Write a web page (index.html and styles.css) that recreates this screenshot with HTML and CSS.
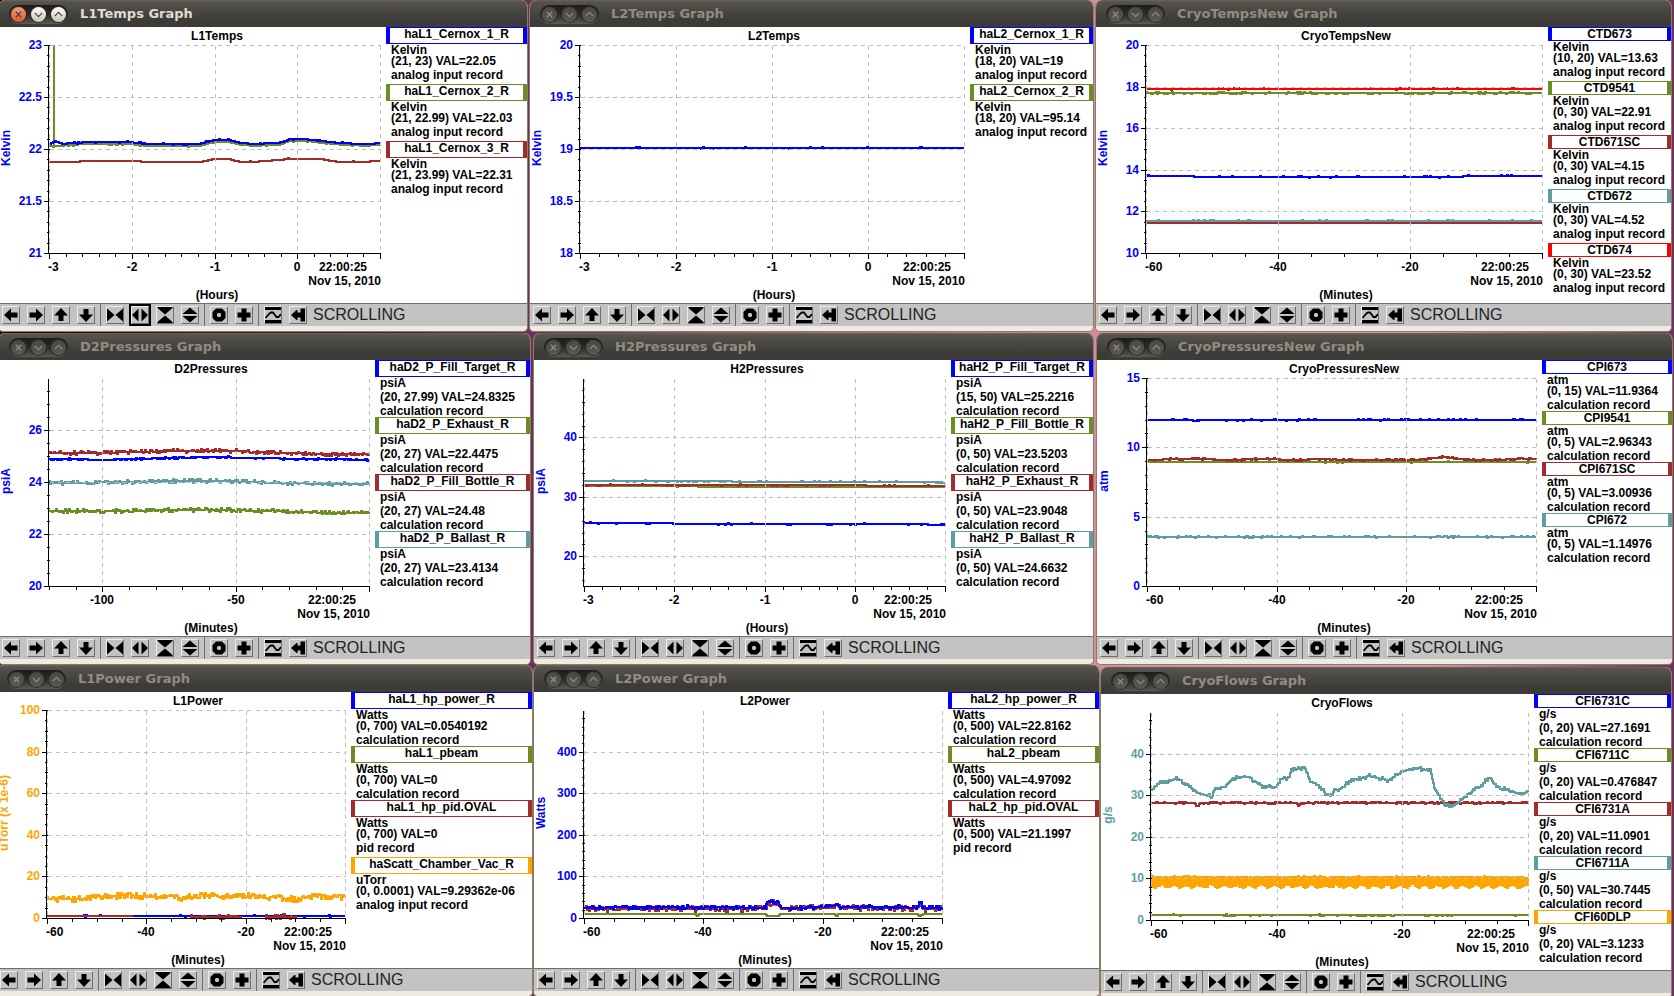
FILE: index.html
```html
<!DOCTYPE html>
<html lang="en">
<head>
    <meta charset="UTF-8">
    <meta name="viewport" content="width=device-width, initial-scale=1.0">
    <title>Strip Charts</title>
    <link rel="stylesheet" href="styles.css">
</head>
<body>
    <svg class="icons" aria-hidden="true">
        <symbol id="close" viewBox="0 0 14 14"><path d="M4.5 4.5l5 5M9.5 4.5l-5 5"/></symbol>
        <symbol id="min" viewBox="0 0 14 14"><path d="M3.5 5.5L7 9l3.500-3.500"/></symbol>
        <symbol id="max" viewBox="0 0 14 14"><path d="M3.500 8.500L7 5l3.500 3.500"/></symbol>
        <symbol id="left" viewBox="0 0 16 16"><path d="M1 8l7-6.500V5.500h6.500v5H8v4z"/></symbol>
        <symbol id="right" viewBox="0 0 16 16"><path d="M15 8L8 1.500V5.500H1.500v5H8v4z"/></symbol>
        <symbol id="up" viewBox="0 0 16 16"><path d="M8 1l7 7.500h-4.500V14h-5V8.500H1z"/></symbol>
        <symbol id="down" viewBox="0 0 16 16"><path d="M8 15l7-7.500h-4.500V2h-5v5.500H1z"/></symbol>
        <symbol id="squeeze-x" viewBox="0 0 16 16"><path d="M0 1.500L7.500 8 0 14.500zM16 1.500L8.500 8l7.500 6.500z"/></symbol>
        <symbol id="expand-x" viewBox="0 0 16 16"><path d="M6.500 1.500v13L0 8zM9.500 1.500v13L16 8z"/></symbol>
        <symbol id="squeeze-y" viewBox="0 0 16 16"><path d="M0.500 0h15v1L8 7.500 0.500 1zM0.500 16h15v-1L8 8.500 0.500 15z"/></symbol>
        <symbol id="expand-y" viewBox="0 0 16 16"><path d="M8 0.500L15.500 7H0.500zM8 15.500L15.500 9H0.500z"/></symbol>
        <symbol id="zero" viewBox="0 0 16 16"><path fill-rule="evenodd" d="M5 1.500h6L14.500 5v6L11 14.500H5L1.500 11V5zM7 6L6 7v2l1 1h2l1-1V7L9 6z"/></symbol>
        <symbol id="plus" viewBox="0 0 16 16"><path d="M5.500 1.500h5v4h4v5h-4v4h-5v-4h-4v-5h4z"/></symbol>
        <symbol id="wave" viewBox="0 0 16 16"><path d="M0 0h16v3H0zM0 13h16v3H0z"/><path class="line" d="M0.500 11L4.500 6.500 6 5.500h2l3.500 4.500h2L16 7"/></symbol>
        <symbol id="latest" viewBox="0 0 16 16"><path d="M1 8l5.500-5h1v2.500H10.500v-4h4.500v13h-4.500v-4H7.500V13h-1z"/></symbol>
    </svg>

    <main class="desktop">
        <div class="row row-temps" id="temps"></div>
        <div class="row row-pressures" id="pressures"></div>
        <div class="row row-power" id="power"></div>
    </main>

    <script src="script.js"></script>
</body>
</html>
```
FILE: styles.css
```css
body {
    margin: 0;
    font-family: "Liberation Sans", Arial, sans-serif;
    font-size: 12px;
    font-weight: bold;
    color: #000;
    overflow-x: hidden;
}
.icons {
    display: none;
}
.desktop {
    min-height: 100vh;
    background: linear-gradient(90deg, #1f0b1c 0, #4b1f42 25%, #733462 33%, #b06a8c 50%, #d48b9d 65%, #d995a4 85%, #70335c 100%);
}
.row {
    display: grid;
    align-items: start;
}
/* the left windows hang slightly over the edge of the screen */
.row-temps {
    grid-template-columns: minmax(0, 530fr) minmax(0, 565fr) minmax(0, 577fr);
    gap: 1px;
    margin-left: -2px;
    padding-right: 2px;
}
.row-pressures {
    grid-template-columns: minmax(0, 533fr) minmax(0, 561fr) minmax(0, 577fr);
    gap: 2px;
    margin: 1px 0 0 -2px;
    padding-right: 1px;
}
.row-power {
    grid-template-columns: minmax(0, 537fr) minmax(0, 567fr) minmax(0, 572fr);
    margin-left: -4px;
    padding-right: 2px;
    overflow: hidden;
}
.row-power .window {
    margin-bottom: -1px;
}
.row-power .window:last-child {
    margin: 2px 0 -3px;
}

/* window frame */
.window {
    border: 1px solid #8a7c66;
    border-top: none;
    border-radius: 7px 7px 5px 5px;
    background: #f0ebe2;
    padding-bottom: 5px;
    overflow: hidden;
}
.titlebar {
    display: flex;
    align-items: center;
    gap: 12px;
    height: 27px;
    padding: 1px 0 0 10px;
    box-sizing: border-box;
    background: linear-gradient(#6a655a 0, #55534c 2px, #3c3b37 75%);
}
.titlebar h2 {
    margin: 0;
    font-family: "DejaVu Sans", sans-serif;
    font-size: 13px;
    line-height: 18px;
    color: #918c80;
    white-space: nowrap;
}
.active .titlebar h2 {
    color: #dfdbd2;
}
.controls {
    display: flex;
    gap: 5px;
    padding: 2px;
    border-radius: 9px;
    background: linear-gradient(#1d1c1a, #2c2b28 50%, #5c5a54);
}
.controls button {
    width: 15px;
    height: 15px;
    padding: 0;
    border: none;
    border-radius: 50%;
    background: linear-gradient(#4a4843, #5a5852);
    box-shadow: 0 0 0 1px #2b2a27;
}
.controls svg {
    display: block;
    width: 15px;
    height: 15px;
    fill: none;
    stroke: #918c80;
    stroke-width: 1.2;
}
.active .controls button {
    background: linear-gradient(#fff, #c9c4ba);
}
.active .controls button:first-child {
    background: linear-gradient(#f79a73, #e2572b);
}
.active .controls svg {
    stroke: #4b4740;
}

/* chart and legend */
.content {
    display: flex;
    min-height: 276px;
    background: #fff;
}
.plot {
    flex: 1;
    min-width: 0;
}
.plot svg {
    display: block;
}
.plot text {
    font-size: 12px;
}
.axis {
    stroke: #000;
    shape-rendering: crispEdges;
}
.grid {
    stroke: #bebebe;
    stroke-dasharray: 4 4;
    shape-rendering: crispEdges;
}
.series {
    fill: none;
    stroke-width: 2;
    shape-rendering: crispEdges;
}
.legend {
    list-style: none;
    margin: 0;
    padding: 0;
    width: 123px;
    line-height: 11px;
    white-space: nowrap;
}
#L1Temps .legend { width: 141px; }
#D2Pressures .legend { width: 155px; }
#H2Pressures .legend { width: 142px; }
#CryoPressuresNew .legend { width: 130px; }
#L1Power .legend { width: 181px; }
#L2Power .legend { width: 151px; }
#CryoFlows .legend { width: 137px; }
.legend h3 {
    margin: 0 0 1px;
    border: solid;
    border-width: 1px 4px;
    font-size: 12px;
    line-height: 12px;
    text-align: center;
}
.legend h3 span {
    color: #000;
}
.legend p {
    margin: 0 0 0 5px;
}
.legend .deep {
    padding-bottom: 3px;
}
.blue { color: #0000ff; stroke: #0000ff; }
.green { color: #6b8e23; stroke: #6b8e23; }
.brown { color: #a52a2a; stroke: #a52a2a; }
.teal { color: #5f9ea0; stroke: #5f9ea0; }
.red { color: #ff0000; stroke: #ff0000; }
.orange { color: #ffa500; stroke: #ffa500; }
.plot text.blue, .plot text.teal, .plot text.orange {
    fill: currentColor;
    stroke: none;
}

/* toolbar */
.toolbar {
    display: flex;
    align-items: center;
    height: 23px;
    box-sizing: border-box;
    padding-left: 3px;
    border-top: 1px solid #6e6e6e;
    background: #c3c3c3;
}
.group {
    display: flex;
    align-items: center;
    gap: 7px;
    height: 22px;
    padding-right: 5px;
    margin-right: 5px;
    border-right: 1px solid #6e6e6e;
}
.group:nth-child(4) {
    border-right: none;
    margin-right: 1px;
}
.group button {
    width: 18px;
    height: 18px;
    padding: 0;
    box-sizing: border-box;
    border: 1px solid;
    border-color: #ececec #6e6e6e #6e6e6e #ececec;
    background: #c3c3c3;
}
.group svg {
    display: block;
    width: 16px;
    height: 16px;
}
#wave .line {
    fill: none;
    stroke: #000;
    stroke-width: 1.8;
}
.group .focused {
    outline: 2px solid #000;
}
.toolbar output {
    font-size: 16px;
    line-height: 22px;
    font-weight: normal;
    color: #222;
}
```
FILE: script.js
```js
const hours = { unit: '(Hours)', min: -3, max: 1, step: 1, minor: 5 };
const minutes = { unit: '(Minutes)', min: -60, max: 0, step: 20, minor: 4 };
const minutes120 = { unit: '(Minutes)', min: -120, max: 0, step: 50, minor: 5 };

const analog = 'analog input record';
const calc = 'calculation record';

// signals: [color, name, units, range and value, record type]
// series: pts are [part of the width, value], noise is in pixels, rate is how often it jumps
const windows = [
    {
        row: 'temps', name: 'L1Temps', active: true, x: hours,
        y: { label: 'Kelvin', color: 'blue', min: 21, max: 23, step: 0.5, minor: 5 },
        signals: [
            ['blue', 'haL1_Cernox_1_R', 'Kelvin', '(21, 23) VAL=22.05', analog],
            ['green', 'haL1_Cernox_2_R', 'Kelvin', '(21, 22.99) VAL=22.03', analog],
            ['brown', 'haL1_Cernox_3_R', 'Kelvin', '(21, 23.99) VAL=22.31', analog]
        ],
        series: [
            { color: 'brown', noise: 0.5, rate: 0.05, pts: [[0, 21.876], [0.08, 21.877], [0.12, 21.886], [0.27, 21.886], [0.28, 21.876], [0.46, 21.876], [0.5, 21.905], [0.54, 21.905], [0.57, 21.88], [0.62, 21.876], [0.65, 21.884], [0.7, 21.896], [0.73, 21.908], [0.82, 21.906], [0.86, 21.88], [0.95, 21.876], [1, 21.887]] },
            { color: 'green', noise: 1, rate: 0.3, spike: 0.015, pts: [[0, 22.03], [0.04, 22.033], [0.1, 22.046], [0.25, 22.046], [0.3, 22.028], [0.45, 22.028], [0.5, 22.072], [0.54, 22.072], [0.58, 22.04], [0.62, 22.03], [0.7, 22.046], [0.73, 22.08], [0.76, 22.08], [0.8, 22.07], [0.86, 22.046], [0.95, 22.032], [1, 22.042]] },
            { color: 'blue', noise: 1, rate: 0.15, pts: [[0, 22.045], [0.018, 22.075], [0.04, 22.05], [0.1, 22.063], [0.25, 22.063], [0.3, 22.045], [0.45, 22.045], [0.5, 22.088], [0.54, 22.088], [0.58, 22.058], [0.62, 22.047], [0.7, 22.063], [0.73, 22.098], [0.76, 22.098], [0.8, 22.085], [0.86, 22.063], [0.95, 22.045], [1, 22.06]] }
        ]
    },
    {
        row: 'temps', name: 'L2Temps', x: hours,
        y: { label: 'Kelvin', color: 'blue', min: 18, max: 20, step: 0.5, minor: 5 },
        signals: [
            ['blue', 'haL2_Cernox_1_R', 'Kelvin', '(18, 20) VAL=19', analog],
            ['green', 'haL2_Cernox_2_R', 'Kelvin', '(18, 20) VAL=95.14', analog]
        ],
        series: [
            { color: 'blue', noise: 1, rate: 0.06, pts: [[0, 19.011], [0.885, 19.011], [0.887, 19.03], [0.89, 19.011], [1, 19.011]] }
        ]
    },
    {
        row: 'temps', name: 'CryoTempsNew', x: minutes,
        y: { label: 'Kelvin', color: 'blue', min: 10, max: 20, step: 2, minor: 4 },
        signals: [
            ['blue', 'CTD673', 'Kelvin', '(10, 20) VAL=13.63', analog],
            ['green', 'CTD9541', 'Kelvin', '(0, 30) VAL=22.91', analog],
            ['brown', 'CTD671SC', 'Kelvin', '(0, 30) VAL=4.15', analog],
            ['teal', 'CTD672', 'Kelvin', '(0, 30) VAL=4.52', analog],
            ['red', 'CTD674', 'Kelvin', '(0, 30) VAL=23.52', analog]
        ],
        series: [
            { color: 'blue', noise: 1, rate: 0.15, pts: [[0, 13.71], [0.115, 13.71], [0.12, 13.67], [0.8, 13.67], [0.81, 13.72], [1, 13.71]] },
            { color: 'green', noise: 1, rate: 0.5, pts: [[0, 17.68], [1, 17.68]] },
            { color: 'teal', noise: 1, rate: 0.12, pts: [[0, 11.56], [1, 11.56]] },
            { color: 'brown', noise: 0, rate: 0, pts: [[0, 11.44], [1, 11.44]] },
            { color: 'red', noise: 1, rate: 0.1, pts: [[0, 17.9], [1, 17.9]] }
        ]
    },
    {
        row: 'pressures', name: 'D2Pressures', x: minutes120,
        y: { label: 'psiA', color: 'blue', min: 20, max: 28, step: 2, minor: 4, open: true },
        signals: [
            ['blue', 'haD2_P_Fill_Target_R', 'psiA', '(20, 27.99) VAL=24.8325', calc],
            ['green', 'haD2_P_Exhaust_R', 'psiA', '(20, 27) VAL=22.4475', calc],
            ['brown', 'haD2_P_Fill_Bottle_R', 'psiA', '(20, 27) VAL=24.48', calc],
            ['teal', 'haD2_P_Ballast_R', 'psiA', '(20, 27) VAL=23.4134', calc]
        ],
        series: [
            { color: 'blue', noise: 1, rate: 0.4, pts: [[0, 24.88], [0.17, 24.86], [0.48, 24.95], [0.6, 24.94], [0.8, 24.88], [1, 24.86]] },
            { color: 'green', noise: 2, rate: 0.6, pts: [[0, 22.9], [0.15, 22.87], [0.48, 22.94], [0.7, 22.88], [0.88, 22.81], [1, 22.83]] },
            { color: 'brown', noise: 2, rate: 0.6, pts: [[0, 25.12], [0.2, 25.13], [0.45, 25.21], [0.6, 25.18], [0.85, 25.07], [1, 25.08]] },
            { color: 'teal', noise: 2, rate: 0.6, pts: [[0, 23.97], [0.15, 23.98], [0.5, 24.05], [0.7, 23.97], [0.88, 23.92], [1, 23.94]] }
        ]
    },
    {
        row: 'pressures', name: 'H2Pressures', x: hours,
        y: { label: 'psiA', color: 'blue', min: 15, max: 50, step: 10, minor: 5, open: true },
        signals: [
            ['blue', 'haH2_P_Fill_Target_R', 'psiA', '(15, 50) VAL=25.2216', calc],
            ['green', 'haH2_P_Fill_Bottle_R', 'psiA', '(0, 50) VAL=23.5203', calc],
            ['brown', 'haH2_P_Exhaust_R', 'psiA', '(0, 50) VAL=23.9048', calc],
            ['teal', 'haH2_P_Ballast_R', 'psiA', '(0, 50) VAL=24.6632', calc]
        ],
        series: [
            { color: 'blue', noise: 1, rate: 0.12, pts: [[0, 25.6], [0.24, 25.55], [0.26, 25.4], [0.9, 25.4], [1, 25.3]] },
            { color: 'green', noise: 1, rate: 0.05, pts: [[0, 31.9], [0.2, 31.75], [1, 31.7]] },
            { color: 'brown', noise: 1, rate: 0.15, pts: [[0, 31.95], [1, 31.9]] },
            { color: 'teal', noise: 1, rate: 0.2, pts: [[0, 32.7], [0.18, 32.6], [0.9, 32.55], [1, 32.4]] }
        ]
    },
    {
        row: 'pressures', name: 'CryoPressuresNew', x: minutes,
        y: { label: 'atm', color: 'blue', min: 0, max: 15, step: 5, minor: 5 },
        signals: [
            ['blue', 'CPI673', 'atm', '(0, 15) VAL=11.9364', calc],
            ['green', 'CPI9541', 'atm', '(0, 5) VAL=2.96343', calc],
            ['brown', 'CPI671SC', 'atm', '(0, 5) VAL=3.00936', calc],
            ['teal', 'CPI672', 'atm', '(0, 5) VAL=1.14976', calc]
        ],
        series: [
            { color: 'blue', noise: 1, rate: 0.2, pts: [[0, 12], [0.11, 12], [0.12, 11.9], [0.13, 11.95], [0.4, 12], [0.42, 11.96], [0.5, 12], [1, 12]] },
            { color: 'green', noise: 1, rate: 0.06, pts: [[0, 8.97], [1, 8.97]] },
            { color: 'brown', noise: 1, rate: 0.5, pts: [[0, 9.08], [0.12, 9.2], [0.2, 9.08], [0.3, 9.18], [0.38, 9.08], [0.43, 9.16], [0.55, 9.08], [0.7, 9.12], [0.76, 9.3], [0.82, 9.12], [0.9, 9.08], [0.96, 9.2], [1, 9.12]] },
            { color: 'teal', noise: 1, rate: 0.3, pts: [[0, 3.55], [1, 3.55]] }
        ]
    },
    {
        row: 'power', name: 'L1Power', x: minutes,
        y: { label: 'uTorr (x 1e-6)', color: 'orange', min: 0, max: 100, step: 20, minor: 4 },
        signals: [
            ['blue', 'haL1_hp_power_R', 'Watts', '(0, 700) VAL=0.0540192', calc],
            ['green', 'haL1_pbeam', 'Watts', '(0, 700) VAL=0', calc],
            ['brown', 'haL1_hp_pid.OVAL', 'Watts', '(0, 700) VAL=0', 'pid record'],
            ['orange', 'haScatt_Chamber_Vac_R', 'uTorr', '(0, 0.0001) VAL=9.29362e-06', analog]
        ],
        series: [
            { color: 'blue', noise: 1, rate: 0.1, pts: [[0, 0.9], [0.78, 0.9], [0.79, 1.6], [0.8, 0.9], [1, 0.9]] },
            { color: 'brown', noise: 0, rate: 0, pts: [[0, 0.9], [0.29, 0.9]] },
            { color: 'brown', noise: 2, rate: 0.5, pts: [[0.48, 0.4], [0.65, 0.4]] },
            { color: 'brown', noise: 3, rate: 0.5, pts: [[0.73, 0.6], [0.84, 0.6]] },
            { color: 'orange', noise: 3, rate: 0.8, pts: [[0, 9.2], [0.11, 9], [0.15, 10], [0.25, 10.8], [0.43, 10.5], [0.45, 9], [0.47, 10.5], [0.55, 10.8], [0.6, 10], [0.7, 10.8], [0.76, 10], [0.84, 9], [0.88, 10.5], [1, 9.8]] }
        ]
    },
    {
        row: 'power', name: 'L2Power', x: minutes,
        y: { label: 'Watts', color: 'blue', min: 0, max: 500, step: 100, minor: 5, open: true },
        signals: [
            ['blue', 'haL2_hp_power_R', 'Watts', '(0, 500) VAL=22.8162', calc],
            ['green', 'haL2_pbeam', 'Watts', '(0, 500) VAL=4.97092', calc],
            ['brown', 'haL2_hp_pid.OVAL', 'Watts', '(0, 500) VAL=21.1997', 'pid record']
        ],
        series: [
            { color: 'green', noise: 0, rate: 0, pts: [[0, 9], [0.31, 9], [0.315, 4], [0.32, 9], [0.505, 9], [0.512, 4], [0.54, 4], [0.546, 9], [0.7, 9], [0.705, 4], [0.71, 9], [0.93, 9], [0.938, 4], [0.945, 9], [1, 9]] },
            { color: 'brown', noise: 3, rate: 0.6, pts: [[0, 22], [0.505, 22], [0.515, 37], [0.54, 35], [0.55, 22], [0.7, 25], [0.705, 34], [0.71, 25], [0.93, 23], [0.94, 32], [0.945, 22], [1, 23]] },
            { color: 'blue', noise: 2, rate: 0.5, pts: [[0, 25], [0.25, 26], [0.505, 25], [0.515, 41], [0.54, 38], [0.55, 23], [0.68, 27], [0.7, 29], [0.705, 36], [0.71, 27], [0.93, 25], [0.94, 41], [0.945, 25], [1, 24]] }
        ]
    },
    {
        row: 'power', name: 'CryoFlows', x: minutes,
        y: { label: 'g/s', color: 'teal', min: 0, max: 50, step: 10, minor: 5, open: true },
        signals: [
            ['blue', 'CFI6731C', 'g/s', '(0, 20) VAL=27.1691', calc],
            ['green', 'CFI6711C', 'g/s', '(0, 20) VAL=0.476847', calc],
            ['brown', 'CFI6731A', 'g/s', '(0, 20) VAL=11.0901', calc],
            ['teal', 'CFI6711A', 'g/s', '(0, 50) VAL=30.7445', calc],
            ['orange', 'CFI60DLP', 'g/s', '(0, 20) VAL=3.1233', calc]
        ],
        series: [
            { color: 'green', noise: 1, rate: 0.2, pts: [[0, 1.1], [1, 1.1]] },
            { color: 'brown', noise: 1, rate: 0.5, pts: [[0, 28.2], [0.115, 28.2], [0.12, 27.2], [0.13, 28.2], [0.385, 28.2], [0.39, 27.4], [0.4, 28.2], [1, 28.2]] },
            { color: 'teal', noise: 2, rate: 0.6, pts: [[0, 31.3], [0.016, 32.7], [0.07, 34], [0.095, 32.5], [0.105, 31.6], [0.134, 30.1], [0.16, 29.7], [0.169, 31.7], [0.193, 31.9], [0.218, 34.2], [0.258, 34.4], [0.292, 32.3], [0.332, 32], [0.342, 33.7], [0.366, 34.4], [0.371, 36.2], [0.408, 36.7], [0.42, 33.7], [0.475, 29.6], [0.485, 31.2], [0.5, 31.5], [0.529, 33.6], [0.578, 34.6], [0.628, 33.6], [0.672, 35.9], [0.707, 36.5], [0.741, 35.8], [0.751, 31.7], [0.776, 28.1], [0.796, 27.1], [0.815, 28.1], [0.835, 30.1], [0.865, 31.7], [0.9, 34.4], [0.909, 32.5], [0.934, 31.5], [0.983, 30.1], [1, 31.1]] },
            { color: 'orange', noise: 1, rate: 0.5, band: 9, pts: [[0, 9.2], [1, 9.2]] }
        ]
    }
];

const tools = [
    [['left', 'Scroll left'], ['right', 'Scroll right'], ['up', 'Scroll up'], ['down', 'Scroll down']],
    [['squeeze-x', 'Zoom in x'], ['expand-x', 'Zoom out x'], ['squeeze-y', 'Zoom in y'], ['expand-y', 'Zoom out y']],
    [['zero', 'Reset'], ['plus', 'Zoom']],
    [['wave', 'Autoscale'], ['latest', 'Latest']]
];

function icon(id) {
    return `<svg><use href="#${id}"/></svg>`;
}

// text with descenders takes three more pixels
function deep(text) {
    return /[gpqy_(]/.test(text) ? 'deep' : '';
}

function legend(signals) {
    return signals.map(([color, name, units, value, record]) => `
        <li>
            <h3 class="${color} ${deep(name)}"><span>${name}</span></h3>
            <p class="${deep(units)}">${units}</p>
            <p class="${deep(value)}">${value}</p>
            <p class="${deep(record)}">${record}</p>
        </li>`).join('');
}

function toolbar(win) {
    return tools.map(group => '<div class="group">' + group.map(([id, label]) => {
        const cls = win.active && id === 'expand-x' ? ' class="focused"' : '';
        return `<button type="button" aria-label="${label}"${cls}>${icon(id)}</button>`;
    }).join('') + '</div>').join('');
}

function addWindow(win) {
    const el = document.createElement('section');
    el.className = win.active ? 'window active' : 'window';
    el.id = win.name;
    el.innerHTML = `
        <header class="titlebar">
            <div class="controls">
                <button type="button" aria-label="Close">${icon('close')}</button>
                <button type="button" aria-label="Minimize">${icon('min')}</button>
                <button type="button" aria-label="Maximize">${icon('max')}</button>
            </div>
            <h2>${win.name} Graph</h2>
        </header>
        <div class="content">
            <div class="plot"></div>
            <ul class="legend">${legend(win.signals)}</ul>
        </div>
        <div class="toolbar">${toolbar(win)}<output>SCROLLING</output></div>`;
    document.getElementById(win.row).appendChild(el);
}

function line(x1, y1, x2, y2, cls) {
    return `<line class="${cls}" x1="${x1 + 0.5}" y1="${y1 + 0.5}" x2="${x2 + 0.5}" y2="${y2 + 0.5}"/>`;
}

function text(x, y, anchor, str, cls = '') {
    return `<text class="${cls}" x="${x}" y="${y}" text-anchor="${anchor}">${str}</text>`;
}

// every minor tick between min and max, counted from zero
function ticks(axis) {
    const list = [];
    const first = Math.ceil(axis.min * axis.minor / axis.step - 0.001);
    const last = Math.floor(axis.max * axis.minor / axis.step + 0.001);
    for (let i = first; i <= last; i++) {
        list.push({ value: i * axis.step / axis.minor, major: i % axis.minor === 0 });
    }
    return list;
}

let seed = 7;
function random() {
    seed = (seed * 16807) % 2147483647;
    return seed / 2147483647;
}

function drawPlot(win) {
    const box = document.querySelector(`#${win.name} .plot`);
    const width = box.clientWidth;
    const left = 50, right = width - 6, top = 18, bottom = 226;
    const { x, y } = win;
    const xPos = v => Math.round(left + (v - x.min) / (x.max - x.min) * (right - left));
    const yPos = v => bottom - (v - y.min) / (y.max - y.min) * (bottom - top);
    let out = '';

    win.series.forEach(s => {
        let d = '';
        let i = 0;
        const first = Math.round(left + s.pts[0][0] * (right - left));
        const last = Math.round(left + s.pts[s.pts.length - 1][0] * (right - left));
        for (let px = first; px <= last; px++) {
            const f = (px - left) / (right - left);
            while (i < s.pts.length - 2 && s.pts[i + 1][0] < f) i++;
            const [x0, v0] = s.pts[i];
            const [x1, v1] = s.pts[i + 1];
            let py = yPos(v0 + (v1 - v0) * Math.min(1, Math.max(0, (f - x0) / (x1 - x0))));
            if (random() < s.rate) py += (random() * 2 - 1) * s.noise;
            if (s.band) py += (px % 2 ? -s.band : s.band + Math.sin(px / 2) * 3) / 2;
            d += (d ? 'H' + px + 'V' : 'M' + px + ' ') + Math.round(py);
        }
        if (s.spike) {
            const px = Math.round(left + s.spike * (right - left));
            d += `M${px} ${top}V${Math.round(yPos(s.pts[0][1]))}`;
        }
        out += `<path class="series ${s.color}" d="${d}"/>`;
    });

    ticks(y).forEach(({ value, major }) => {
        if (value === y.max && y.open) return;
        const py = Math.round(yPos(value));
        out += line(left - (major ? 6 : 3), py, left, py, 'axis');
        if (major) {
            out += line(left, py, right, py, 'grid');
            out += text(left - 7, py + 4, 'end', +value.toFixed(1), y.color);
        }
    });

    ticks(x).forEach(({ value, major }) => {
        const px = xPos(value);
        out += line(px, bottom, px, bottom + (major ? 5 : 3), 'axis');
        if (!major) return;
        out += line(px, top, px, bottom, 'grid');
        if (value === x.min) {
            out += text(left - 1, 244, 'start', value);
        } else if (value < x.max) {
            out += text(px, 244, 'middle', value);
        }
    });

    out += line(left - 1, top, left - 1, bottom, 'axis');
    out += line(left - 1, bottom, right, bottom, 'axis');
    const middle = Math.round((left + right) / 2);
    out += text(middle + 2, 13, 'middle', win.name);
    out += text(right - 37, 244, 'middle', '22:00:25');
    out += text(right + 1, 258, 'end', 'Nov 15, 2010');
    out += text(middle + 2, 272, 'middle', x.unit);
    out += `<text class="${y.color}" transform="translate(11 121) rotate(-90)" text-anchor="middle">${y.label}</text>`;

    box.innerHTML = `<svg width="${width}" height="276">${out}</svg>`;
}

windows.forEach(addWindow);
windows.forEach(drawPlot);
window.addEventListener('resize', () => windows.forEach(drawPlot));
```
